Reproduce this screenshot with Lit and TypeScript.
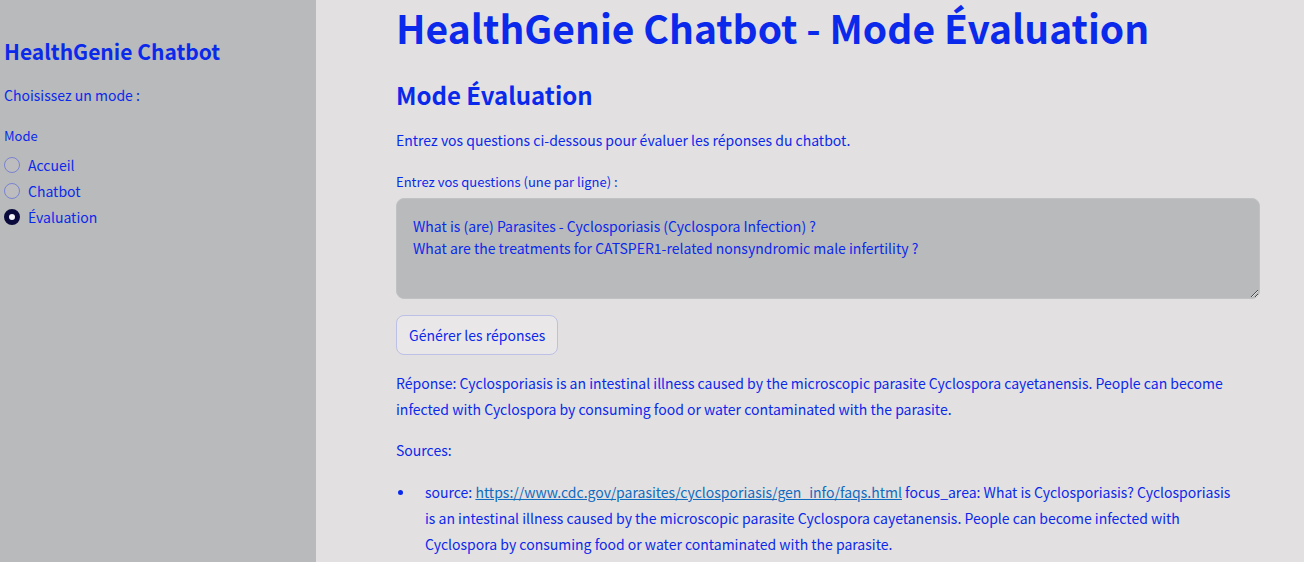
import { LitElement, html, css } from "lit";
import { customElement, state } from "lit/decorators.js";

const MODES = ["Accueil", "Chatbot", "Évaluation"];

@customElement("app-root")
export class AppRoot extends LitElement {
  @state() mode = "Évaluation";
  @state() questions =
    "What is (are) Parasites - Cyclosporiasis (Cyclospora Infection) ?\nWhat are the treatments for CATSPER1-related nonsyndromic male infertility ?";

  static styles = css`
    :host {
      --text: #0b29eb;
      --panel: #b8babb;
      --page: #e2e0e1;
      display: flex;
      height: 100vh;
      overflow: hidden;
      background: var(--page);
      color: var(--text);
      font-family: "Source Sans Pro", "Noto Sans CJK SC", sans-serif;
      font-size: 14px;
      line-height: 26px;
    }
    *, *::before { box-sizing: border-box; }
    h1, h2, p, ul, fieldset { margin: 0; padding: 0; border: 0; }
    .sidebar {
      flex: 0 0 316px;
      background: var(--panel);
      padding: 35px 4px;
    }
    .brand { font-size: 21px; line-height: 32px; font-weight: 600; }
    .prompt { margin-top: 15px; }
    .modes { margin-top: 16px; min-width: 0; }
    .small { display: block; padding: 0; font-size: 13px; line-height: 24px; }
    .mode { display: flex; align-items: center; gap: 8px; width: fit-content; }
    .options { padding-top: 4px; }
    .radio {
      appearance: none;
      width: 16px;
      height: 16px;
      margin: 0;
      border: 1px solid #7983d2;
      border-radius: 50%;
      background: #bdbdbf;
    }
    .radio:checked { border: 5px solid #0a0a3c; background: #f4f4fa; }
    .main {
      flex: 1;
      min-width: 0;
      overflow: hidden;
      padding: 0 44px 0 80px;
    }
    .title { font-size: 39px; line-height: 54px; font-weight: 700; }
    .subtitle { margin-top: 24px; font-size: 24px; line-height: 34px; font-weight: 600; }
    .intro { margin-top: 15px; }
    .field { margin-top: 17px; }
    .questions {
      display: block;
      width: 100%;
      height: 101px;
      margin-top: 4px;
      padding: 16px;
      border: 1px solid #c0c1c2;
      border-radius: 8px;
      outline: 0;
      background: var(--panel);
      color: inherit;
      font: inherit;
      line-height: 22px;
      resize: vertical;
    }
    .generate {
      display: block;
      height: 40px;
      margin-top: 16px;
      padding: 0 12px;
      border: 1px solid #bcc0e6;
      border-radius: 8px;
      background: #e9e7e8;
      color: inherit;
      font: inherit;
    }
    .answer { margin-top: 15px; }
    .sources { list-style: none; margin-top: 16px; padding-right: 20px; }
    .source { display: flex; }
    .source::before {
      content: "";
      flex: 0 0 5px;
      height: 5px;
      margin: 11px 22px 0 2px;
      border-radius: 50%;
      background: var(--text);
    }
    .link { color: #0f6cc0; }
  `;

  render() {
    return html`
      <aside class="sidebar">
        <h2 class="brand">HealthGenie Chatbot</h2>
        <p class="prompt">Choisissez un mode :</p>
        <fieldset class="modes">
          <legend class="small">Mode</legend>
          <div class="options">
            ${MODES.map(
              (m) => html`<label class="mode">
                <input class="radio" type="radio" name="mode" .checked=${m === this.mode} @change=${() => (this.mode = m)} />
                <span>${m}</span>
              </label>`
            )}
          </div>
        </fieldset>
      </aside>
      <main class="main">
        <h1 class="title">HealthGenie Chatbot - Mode Évaluation</h1>
        <h2 class="subtitle">Mode Évaluation</h2>
        <p class="intro">Entrez vos questions ci-dessous pour évaluer les réponses du chatbot.</p>
        <div class="field">
          <label class="small" for="questions">Entrez vos questions (une par ligne) :</label>
          <textarea class="questions" id="questions" spellcheck="false" .value=${this.questions}></textarea>
        </div>
        <button class="generate" type="button">Générer les réponses</button>
        <p class="answer">Réponse: Cyclosporiasis is an intestinal illness caused by the microscopic parasite Cyclospora cayetanensis. People can become infected with Cyclospora by consuming food or water contaminated with the parasite.</p>
        <p class="answer">Sources:</p>
        <ul class="sources">
          <li class="source">
            <span>source: <a class="link" href="https://www.cdc.gov/parasites/cyclosporiasis/gen_info/faqs.html">https://www.cdc.gov/parasites/cyclosporiasis/gen_info/faqs.html</a> focus_area: What is Cyclosporiasis? Cyclosporiasis is an intestinal illness caused by the microscopic parasite Cyclospora cayetanensis. People can become infected with Cyclospora by consuming food or water contaminated with the parasite.</span>
          </li>
        </ul>
      </main>
    `;
  }
}
